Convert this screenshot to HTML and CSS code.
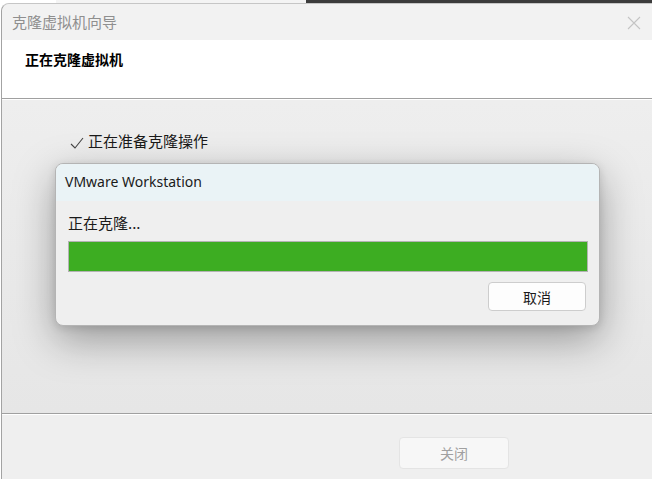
FILE: index.html
```html
<!DOCTYPE html>
<html>
<head>
  <meta charset="utf-8">
  <title>克隆虚拟机向导</title>
  <link rel="stylesheet" href="styles.css">
</head>
<body>
  <div class="desk">
    <div class="desk-light"></div>
    <div class="desk-dark"></div>
  </div>

  <div class="wizard">
    <div class="titlebar">
      <span class="title">克隆虚拟机向导</span>
      <svg class="close" width="14" height="14" viewBox="0 0 14 14">
        <path d="M1 1 L13 13 M13 1 L1 13" stroke="#c4c4c4" stroke-width="1.1" fill="none"/>
      </svg>
    </div>

    <div class="head">
      <h1 class="head-title">正在克隆虚拟机</h1>
    </div>

    <div class="content">
      <div class="step">
        <svg class="check" width="14" height="12" viewBox="0 0 14 12">
          <path d="M1 7 L5 11 L13 1" stroke="#444" stroke-width="1.1" fill="none"/>
        </svg>
        <span>正在准备克隆操作</span>
      </div>
    </div>

    <div class="footer">
      <button class="btn-close" disabled>关闭</button>
    </div>

    <!-- progress popup over the wizard -->
    <div class="dialog">
      <div class="dialog-title">VMware Workstation</div>
      <div class="dialog-body">
        <p class="dialog-msg">正在克隆...</p>
        <div class="bar"><div class="bar-fill" style="width: 100%"></div></div>
        <div class="dialog-actions">
          <button class="btn-cancel">取消</button>
        </div>
      </div>
    </div>
  </div>
</body>
</html>
```

FILE: styles.css
```css
* {
	margin: 0;
	padding: 0;
	box-sizing: border-box;
}

body {
	width: 652px;
	height: 479px;
	overflow: hidden;
	background-color: #ffffff;
	font-family: "Noto Sans", "Noto Sans CJK SC", sans-serif;
	font-size: 15px;
	color: #1a1a1a;
}

.desk {
	display: flex;
	height: 3px;
}

.desk-light {
	width: 306px;
	background-color: #f4f4f4;
	border-left: 56px solid #ffffff;
}

.desk-dark {
	flex: 1;
	background-color: #3c3c3c;
}

.wizard {
	position: relative;
	margin-left: 1px;
	height: 476px;
	display: flex;
	flex-direction: column;
	border-left: 1px solid #a3a3a3;
	border-top: 1px solid #c6c6c6;
	border-top-left-radius: 8px;
	background-color: #eeeeee;
}

.titlebar {
	height: 36px;
	display: flex;
	align-items: center;
	justify-content: space-between;
	padding: 0 11px 0 10px;
	background-color: #f2f2f2;
	border-top-left-radius: 8px;
}

.title {
	font-family: "Noto Sans CJK SC", sans-serif;
	font-size: 15px;
	color: #8f8f8f;
	margin-top: -1px;
}

.close {
	margin-top: 1px;
}

.head {
	height: 59px;
	background-color: #ffffff;
	border-bottom: 1px solid #a0a0a0;
	padding: 9px 0 0 23px;
}

.head-title {
	font-family: "Noto Sans CJK SC", sans-serif;
	font-size: 14px;
	font-weight: 700;
	color: #000000;
}

.content {
	flex: 1;
	border-top: 1px solid #ffffff;
	border-bottom: 1px solid #a0a0a0;
	background: linear-gradient(180deg, #eeeeee 0%, #e9e9e9 60%, #e6e6e6 100%);
	padding: 30px 0 0 68px;
}

.step {
	display: flex;
	align-items: center;
	gap: 4px;
	font-family: "Noto Sans CJK SC", sans-serif;
	font-size: 15px;
	color: #1a1a1a;
}

.check {
	margin-top: 5px;
}

.footer {
	height: 65px;
	border-top: 1px solid #ffffff;
	background-color: #efefef;
	padding: 22px 0 0 397px;
}

.btn-close {
	width: 110px;
	height: 32px;
	background-color: #f7f7f7;
	border: 1px solid #e4e4e4;
	border-radius: 4px;
	font-family: "Noto Sans CJK SC", sans-serif;
	font-size: 14px;
	color: #a0a0a0;
}

.dialog {
	position: absolute;
	left: 53px;
	top: 159px;
	width: 545px;
	height: 163px;
	border: 1px solid #b4b4b4;
	border-radius: 8px;
	overflow: hidden;
	background-color: #efefef;
	box-shadow: 0 14px 40px rgba(0, 0, 0, 0.34), 0 2px 8px rgba(0, 0, 0, 0.12);
}

.dialog-title {
	height: 37px;
	line-height: 36px;
	padding-left: 9px;
	background-color: #eaf3f6;
	font-family: "Noto Sans", sans-serif;
	font-size: 14px;
	color: #1a1a1a;
}

.dialog-body {
	padding: 10px 12px 0 12px;
}

.dialog-msg {
	font-family: "Noto Sans CJK SC", sans-serif;
	font-size: 15px;
	line-height: 24px;
	color: #1a1a1a;
}

.bar {
	margin-top: 6px;
	width: 520px;
	height: 31px;
	border: 1px solid #b3b3b3;
	background-color: #e6e6e6;
}

.bar-fill {
	height: 100%;
	background-color: #3dad22;
}

.dialog-actions {
	display: flex;
	justify-content: flex-end;
	margin-top: 10px;
	padding-right: 1px;
}

.btn-cancel {
	width: 98px;
	height: 29px;
	background-color: #fdfdfd;
	border: 1px solid #cdcdcd;
	border-radius: 4px;
	font-family: "Noto Sans CJK SC", sans-serif;
	font-size: 14px;
	color: #1a1a1a;
}
```
